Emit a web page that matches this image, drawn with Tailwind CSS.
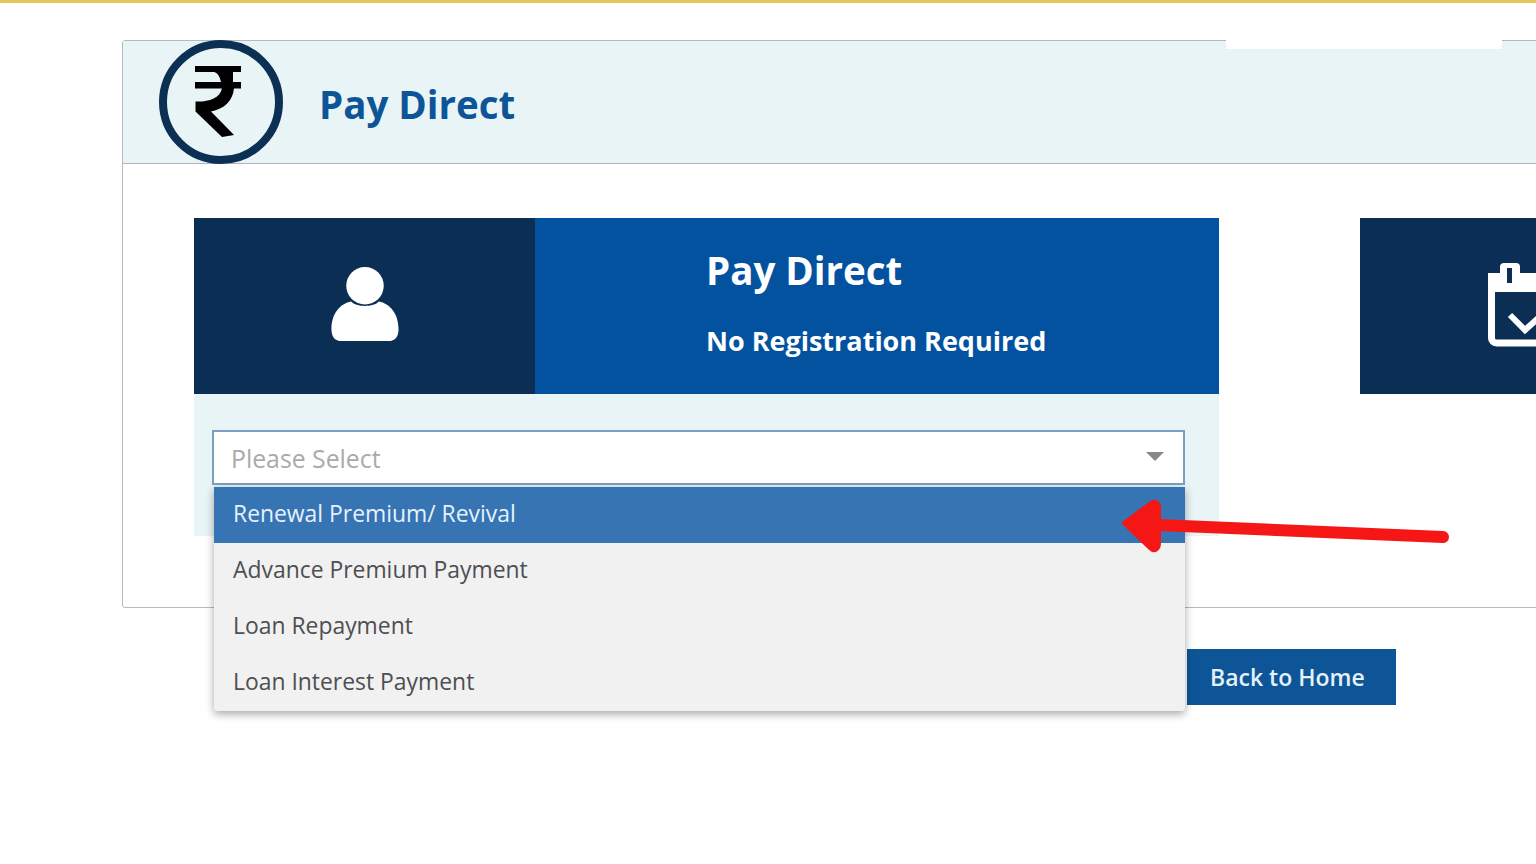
<!DOCTYPE html>
<html lang="en">
<head>
<meta charset="utf-8">
<title>Pay Direct</title>
<script src="https://cdn.jsdelivr.net/npm/@tailwindcss/browser@4"></script>
</head>
<body class="bg-white font-['Open_Sans',sans-serif]">
<div class="relative w-[1536px] h-[864px] overflow-hidden bg-white">
  <div class="h-[3px] bg-[#e6c65c]"></div>

  <div class="ml-[122px] mt-[37px] w-[1500px] h-[568px] border border-[#b5babc] rounded-[3px] bg-white">
    <div class="h-[123px] bg-[#e9f4f7] border-b border-[#b0b6b7] flex items-center pl-[35px]">
      <svg class="w-[126px] h-[126px] shrink-0" viewBox="0 0 126 126" fill="none">
        <circle cx="63" cy="63" r="58" stroke="#0c2f54" stroke-width="8"/>
        <path d="M37 27H83V33H37ZM37 43H83V49.500H37Z" fill="#000"/>
        <path d="M37.500 62.500C50 63 62 60 64 49H76C75 62 66 70 53 72.500L76 96L64 98L37.500 72.500ZM56 33H75V43H63C62 38 60 34 56 33Z" fill="#000"/>
      </svg>
      <h1 class="ml-[35px] text-[38.500px] leading-none font-bold text-[#0d5596] mt-[4px]">Pay Direct</h1>
    </div>
    <div class="flex gap-[141px] pl-[71px] pt-[54px]">
      <div class="w-[1025px] shrink-0 h-[318px] bg-[#e9f4f7]">
        <div class="flex h-[176px]">
          <div class="w-[341px] bg-[#0b2f54] flex items-center justify-center">
            <svg class="w-[70px] h-[75px] mt-[-4px]" viewBox="0 0 70 76" fill="#fff">
              <circle cx="35" cy="19" r="19"/>
              <path d="M21 35C26 41 44 41 49 35C60 37 69 47 69 63C69 71 65 75 59 75H11C5 75 1 71 1 63C1 47 10 37 21 35Z"/>
            </svg>
          </div>
          <div class="flex-1 bg-[#02529f] pl-[171px] pt-[27px] text-white">
            <div class="text-[38.500px] leading-[50px] font-bold">Pay Direct</div>
            <div class="text-[27px] leading-[36px] font-bold mt-[28px]">No Registration Required</div>
          </div>
        </div>
      </div>
      <div class="w-[400px] shrink-0">
        <div class="h-[176px] bg-[#0b2f54] pl-[127px] pt-[45px]">
          <svg class="w-[80px] h-[84px]" viewBox="0 0 80 84" fill="none" stroke="#fff">
            <rect x="4.500" y="14" width="80" height="66" rx="5" stroke-width="7"/>
            <path d="M1 10H80V29H1Z" fill="#fff" stroke="none"/>
            <rect x="13" y="0" width="20" height="24" rx="4" fill="#fff" stroke="none"/>
            <path d="M22.500 5V20" stroke="#0b2f54" stroke-width="5"/>
            <path d="M23 52L38 67L58 49" stroke-width="6"/>
          </svg>
        </div>
      </div>
    </div>
  </div>

  <div class="ml-[1187px] mt-[41px] w-[209px] h-[56px] bg-[#0d5596] text-[#e4f1fa] text-[23px] font-semibold flex items-center pl-[23px]">Back to Home</div>

  <div class="absolute left-[1226px] top-[38px] w-[276px] h-[11px] bg-white"></div>

  <div class="absolute left-[212px] top-[430px] w-[973px] h-[55px] bg-white border-2 border-[#7ba0bf] flex items-center justify-between pl-[17px] pr-[19px] text-[24.800px] text-[#a9abab]">
    <span class="mt-[2px]">Please Select</span>
    <span class="w-0 h-0 border-l-[9px] border-r-[9px] border-t-[9px] border-l-transparent border-r-transparent border-t-[#888888] mt-[-2px]"></span>
  </div>

  <ul class="absolute left-[214px] top-[487px] w-[971px] bg-[#f1f1f1] shadow-[0_3px_8px_rgba(0,0,0,0.35)] text-[22.900px] text-[#4d4f52] rounded-b-[3px]">
    <li class="h-[56px] bg-[#3674b3] text-[#e6f2fb] flex items-center pl-[19px] pb-[2px]">Renewal Premium/ Revival</li>
    <li class="h-[56px] flex items-center pl-[19px] pb-[2px]">Advance Premium Payment</li>
    <li class="h-[56px] flex items-center pl-[19px] pb-[2px]">Loan Repayment</li>
    <li class="h-[56px] flex items-center pl-[19px] pb-[2px]">Loan Interest Payment</li>
  </ul>

  <svg class="absolute left-[1115px] top-[495px] w-[340px] h-[62px]" viewBox="0 0 340 62" fill="#f51616">
    <path d="M43 30L328 42" stroke="#f51616" stroke-width="12" stroke-linecap="round"/>
    <path d="M9 28L36 8C40 5 44 8 44 12V48C44 55 39 57 35 53Z" stroke="#f51616" stroke-width="4" stroke-linejoin="round"/>
  </svg>
</div>
</body>
</html>
